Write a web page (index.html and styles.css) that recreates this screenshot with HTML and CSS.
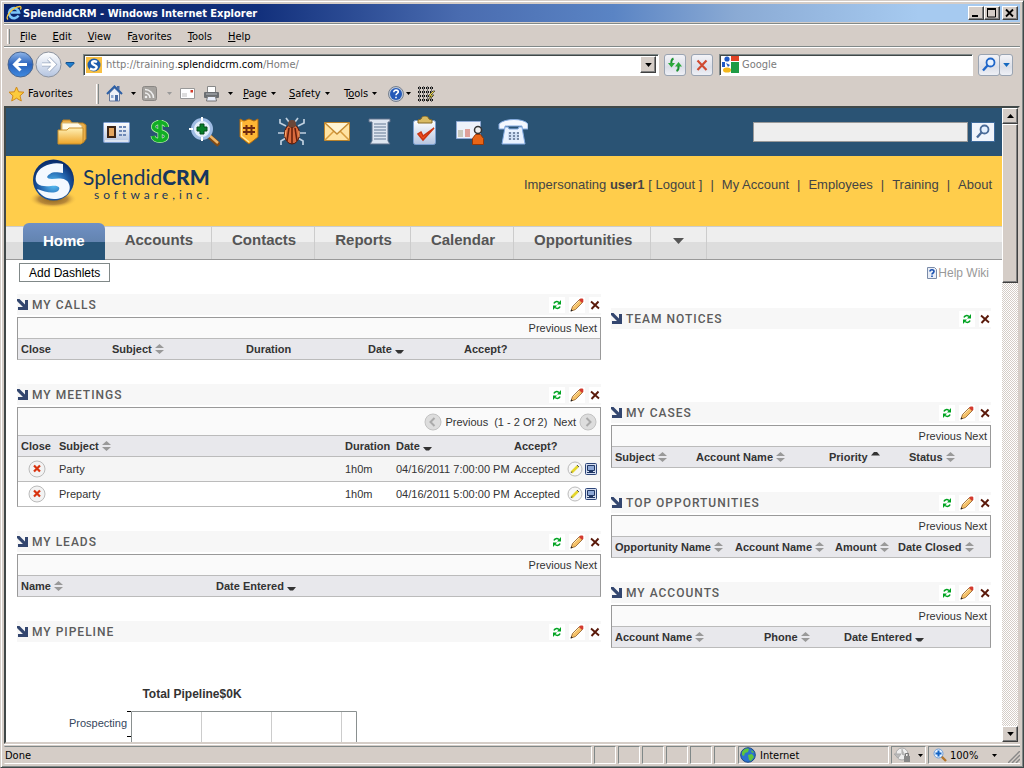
FILE: index.html
```html
<!DOCTYPE html>
<html lang="en">
<head>
	<meta charset="utf-8">
	<title>SplendidCRM</title>
	<link rel="stylesheet" href="styles.css">
</head>
<body>
<svg class="defs" aria-hidden="true">
	<defs>
		<linearGradient id="gBlue" x1="0" y1="0" x2="0" y2="1"><stop offset="0" stop-color="#8fb6ea"/><stop offset=".5" stop-color="#2a62bb"/><stop offset="1" stop-color="#3f8ae0"/></linearGradient>
		<linearGradient id="gPale" x1="0" y1="0" x2="0" y2="1"><stop offset="0" stop-color="#fff"/><stop offset="1" stop-color="#b4c4e0"/></linearGradient>
		<linearGradient id="gGold" x1="0" y1="0" x2="0" y2="1"><stop offset="0" stop-color="#fff0b4"/><stop offset="1" stop-color="#eda52a"/></linearGradient>
		<radialGradient id="gLogo" cx=".5" cy=".6" r=".55"><stop offset="0" stop-color="#5bc4f8"/><stop offset=".6" stop-color="#2263ad"/><stop offset="1" stop-color="#0a2e6e"/></radialGradient>
		<radialGradient id="gShadow"><stop offset="0" stop-color="#8d641d"/><stop offset=".6" stop-color="#b8893a"/><stop offset="1" stop-color="#ffcd4b" stop-opacity="0"/></radialGradient>
	</defs>
	<symbol id="caret" viewBox="0 0 5 3"><path d="M0 0h5L2.500 3z"/></symbol>
	<symbol id="sort" viewBox="0 0 9 10"><path d="M4.500 0L9 4H0zM0 6h9L4.500 10z" fill="#999"/></symbol>
	<symbol id="desc" viewBox="0 0 9 10"><path d="M0 6h9L6 9.500H3z" fill="#333"/></symbol>
	<symbol id="asc" viewBox="0 0 9 10"><path d="M3 0h3l3 3.500H0z" fill="#333"/></symbol>
	<symbol id="arrow" viewBox="0 0 11 11"><path d="M0 0h2.500L8 5.500V1h3v10H1V8h5L0 2z" fill="#33466f"/></symbol>
	<symbol id="refresh" viewBox="0 0 16 16"><path fill="#fff" d="M0 0h16v16H0z"/><path d="M5 6.500c.5-2 3-2.500 5-1M11 9.500c-.5 2-3 2.500-5 1" fill="none" stroke="#00a321" stroke-width="1.500"/><path d="M12 3v4.500H8zM4 13V8.500h4z" fill="#00a321"/></symbol>
	<symbol id="pencil" viewBox="0 0 16 16"><path fill="#fff" d="M0 0h16v16H0z"/><path d="M2 14l1.500-4.500 7-7 3 3-7 7z" fill="#f5c168" stroke="#8e5a26" stroke-width=".8"/><path d="M4.500 9.500l6-6" stroke="#ffe9b4"/><path d="M10 3l1.500-1.500h2l.8.8v2L13 6z" fill="#d33a2e"/><path d="M1.500 14.500l.8-2.300 1.500 1.500z" fill="#222"/></symbol>
	<symbol id="cross" viewBox="0 0 12 16"><path fill="#fff" d="M0 0h12v16H0z"/><path d="M2 4.500l8 7M9.500 4.500l-7 7.500" stroke="#5a1a0b" stroke-width="1.900" fill="none"/></symbol>
	<symbol id="closeRow" viewBox="0 0 18 18"><circle cx="9" cy="9" r="8" fill="#f3f3f3" stroke="#bbb"/><path d="M6 5.500l6 6M12 5.500l-6 6" stroke="#d8330f" stroke-width="2.200"/></symbol>
	<symbol id="editRow" viewBox="0 0 16 16"><circle cx="8" cy="8" r="7" fill="#f7f7f7" stroke="#bbb"/><path d="M4.500 11.500L11 5" stroke="#e5d62c" stroke-width="2.600"/><path d="M4 12l1-1.500M10 4l2 2" stroke="#555"/></symbol>
	<symbol id="viewRow" viewBox="0 0 12 12"><rect x=".5" y=".5" width="11" height="11" rx="1" fill="#d5def0" stroke="#2c4478"/><path d="M2.500 2.500h7v5h-7z" fill="#8ea8d6" stroke="#203765"/><path d="M2 9.500h8M4 8.500h4" stroke="#203765"/></symbol>
	<symbol id="lens" viewBox="0 0 16 16"><circle cx="9.500" cy="5.500" r="4" fill="#e6f1ff" stroke="currentColor" stroke-width="1.800"/><path d="M6.500 8.500L2 13.500" stroke="currentColor" stroke-width="2.400"/></symbol>
	<symbol id="prev" viewBox="0 0 18 18"><circle cx="9" cy="9" r="8" fill="#ddd" stroke="#c3c3c3"/><path d="M10.500 5L6.500 9l4 4" fill="none" stroke="#aaa" stroke-width="2"/></symbol>
	<symbol id="next" viewBox="0 0 18 18"><circle cx="9" cy="9" r="8" fill="#ddd" stroke="#c3c3c3"/><path d="M7.500 5l4 4-4 4" fill="none" stroke="#aaa" stroke-width="2"/></symbol>
	<symbol id="scrollUp" viewBox="0 0 7 4"><path d="M3.500 0L7 4H0z"/></symbol>
</svg>
<div class="window">
	<header class="titlebar">
		<svg width="16" height="16" viewBox="0 0 16 16"><path d="M12.500 10.500a5 5 0 1 1 .5-3H5" fill="none" stroke="#7cc6f7" stroke-width="2.600"/><path d="M2 14.500C-1 12 6 2 14 1.500c1.500 0 1 2 .3 3" fill="none" stroke="#f5c53a" stroke-width="1.300"/></svg>
		<h1>SplendidCRM - Windows Internet Explorer</h1>
		<div class="window-buttons">
			<button aria-label="Minimize"><svg width="12" height="10"><path d="M2 7h6v2H2z"/></svg></button>
			<button aria-label="Maximize"><svg width="12" height="10"><path d="M1.500 1h8v8h-8z" fill="none" stroke="#000"/><path d="M1 0h9v2H1z"/></svg></button>
			<button aria-label="Close"><svg width="12" height="10"><path d="M2 1.500l7 7M9 1.500l-7 7" stroke="#000" stroke-width="1.800"/></svg></button>
		</div>
	</header>
	<nav class="menubar">
		<span class="grip"></span>
		<button><u>F</u>ile</button>
		<button><u>E</u>dit</button>
		<button><u>V</u>iew</button>
		<button>F<u>a</u>vorites</button>
		<button><u>T</u>ools</button>
		<button><u>H</u>elp</button>
	</nav>
	<div class="address-bar">
		<div class="history">
			<button aria-label="Back"><svg width="27" height="27" viewBox="0 0 27 27"><circle cx="13.500" cy="13.500" r="12.500" fill="url(#gBlue)" stroke="#47648f"/><path d="M20 13.500H8M13.500 7.500l-6 6 6 6" fill="none" stroke="#fff" stroke-width="3"/></svg></button>
			<button aria-label="Forward"><svg width="27" height="27" viewBox="0 0 27 27"><circle cx="13.500" cy="13.500" r="12.500" fill="url(#gPale)" stroke="#8c939f"/><path d="M7 13.500h12M13.500 7.500l6 6-6 6" fill="none" stroke="#9ba9c0" stroke-width="4"/><path d="M7 13.500h12M13.500 7.500l6 6-6 6" fill="none" stroke="#fff" stroke-width="2.600"/></svg></button>
			<button aria-label="Recent pages"><svg width="10" height="6" viewBox="0 0 10 6"><path d="M1 .5h8v1L5 5.500 1 1.500z" fill="#1f7fd0" stroke="#12508f"/></svg></button>
		</div>
		<div class="address field">
			<svg width="16" height="16" viewBox="0 0 16 16"><path fill="#f8c043" d="M0 0h16v16H0z"/><circle cx="8" cy="8" r="6.500" fill="#1e5cab"/><path d="M11 5C7 3 4.500 5.500 7 7.200s5 2 3 4.300-5 .5-6 0" fill="none" stroke="#fff" stroke-width="2.400"/></svg>
			<a href="#">http://training.<b>splendidcrm.com</b>/Home/</a>
			<button class="drop" aria-label="Show addresses"><svg width="7" height="4"><use href="#caret"/></svg></button>
		</div>
		<button class="tool" aria-label="Refresh"><svg width="16" height="16" viewBox="0 0 16 16"><path d="M6.500 1.500C4 2.500 4 5 4.500 8" fill="none" stroke="#1c9130" stroke-width="2"/><path d="M1 6h7l-3.500 4.500zM8 9.500h7L11.500 5z" fill="#2ca93b"/><path d="M11.500 9c.3 2.500 0 4-2 5" fill="none" stroke="#1c9130" stroke-width="2"/></svg></button>
		<button class="tool" aria-label="Stop"><svg width="16" height="16" viewBox="0 0 16 16"><path d="M3.500 3.500l9 9.500M12.500 3.500l-9 9.500" stroke="#d04a31" stroke-width="2.200"/></svg></button>
		<div class="web-search field">
			<svg width="17" height="17" viewBox="0 0 17 17"><path fill="#1f9b45" d="M9 6h8v11H9z"/><path fill="#e24325" d="M9 0h8v5H9z"/><path fill="#fff" d="M0 0h8v17H0z"/><circle cx="5" cy="3" r="2.600" fill="#2059c4"/><path fill="#2059c4" d="M0 6h3v5H0zM4 7l4 2-2 2z"/><ellipse cx="5" cy="14" rx="4" ry="2.600" fill="#f5b81b"/></svg>
			<input type="text" placeholder="Google" aria-label="Search Google">
		</div>
		<div class="go">
			<button class="tool blue" aria-label="Search"><svg width="16" height="16"><use href="#lens"/></svg></button>
			<button class="tool narrow" aria-label="Search options"><svg width="7" height="4" fill="#1468c0"><use href="#caret"/></svg></button>
		</div>
	</div>
	<div class="command-bar">
		<button class="favorites"><svg width="17" height="16" viewBox="0 0 17 16"><path d="M8.500 1l2.100 4.800 5.400.4-4 3.600 1.300 5.200-4.800-2.800L3.700 15 5 9.800 1 6.200l5.400-.4z" fill="#fccb3c" stroke="#d18a1a"/></svg>Favorites</button>
		<span class="grip"></span>
		<button class="cmd home"><svg width="17" height="17" viewBox="0 0 17 17"><path d="M3.500 8v8h10V8l-5-5z" fill="#eef1f8" stroke="#66799c"/><path d="M1 9l7.500-7.500L16 9" fill="none" stroke="#2c5fa5" stroke-width="2"/><path d="M11 1h2.500v4L11 3zM9 10h3v6H9z" fill="#496ba3"/><path d="M5 10h2.500v3H5z" fill="#8ea8cf"/></svg><svg class="car"><use href="#caret"/></svg></button>
		<button class="cmd feed"><svg width="15" height="15" viewBox="0 0 15 15"><rect x=".5" y=".5" width="14" height="14" rx="2" fill="#a6a39f" stroke="#8a8784"/><path d="M3 7a5 5 0 0 1 5 5M3 3.500A8.500 8.500 0 0 1 11.500 12" stroke="#eee" stroke-width="1.600" fill="none"/><circle cx="4" cy="11" r="1.300" fill="#eee"/></svg><svg class="car dim"><use href="#caret"/></svg></button>
		<button class="cmd mail" aria-label="Read mail"><svg width="15" height="11" viewBox="0 0 15 11"><path d="M.5.5h14v10H.5z" fill="#fff" stroke="#999"/><path d="M10.500 2h2.500v2.500h-2.500z" fill="#d43a29"/><path d="M2 6h5M2 8h5" stroke="#bbb"/></svg></button>
		<button class="cmd print"><svg width="17" height="16" viewBox="0 0 17 16"><path d="M4.500.5h8v6h-8z" fill="#fff" stroke="#888"/><rect x="1" y="6" width="15" height="6" rx="1" fill="#6b6e72"/><path d="M3 8h11" stroke="#b8bbc0"/><path d="M4.500 10.500h8l1 4.500h-10z" fill="#e8eefb" stroke="#777"/></svg><svg class="car"><use href="#caret"/></svg></button>
		<button class="cmd page"><span><u>P</u>age</span><svg class="car"><use href="#caret"/></svg></button>
		<button class="cmd safety"><span><u>S</u>afety</span><svg class="car"><use href="#caret"/></svg></button>
		<button class="cmd tools"><span>T<u>o</u>ols</span><svg class="car"><use href="#caret"/></svg></button>
		<button class="cmd help"><svg width="16" height="16" viewBox="0 0 16 16"><circle cx="8" cy="8" r="7.500" fill="#bcc8da" stroke="#77808d"/><circle cx="8" cy="8" r="6" fill="#2459b8"/><path d="M5.800 6.200c0-3 4.500-2.500 4.500-.2C10.300 7.500 8 7.400 8 9.200M8 10.700v1.500" fill="none" stroke="#fff" stroke-width="1.600"/></svg><svg class="car"><use href="#caret"/></svg></button>
		<button class="cmd" aria-label="Bits"><svg width="17" height="16" viewBox="0 0 17 16"><path d="M0 2h16M0 6h16M0 10h16M0 14h16" stroke="#111" stroke-width="3" stroke-dasharray="3 1"/><path d="M1 2h15M1 6h15M1 10h15M1 14h15" stroke="#fff" stroke-width="1" stroke-dasharray="1 3"/><path d="M0 .5h16M0 4.500h16M0 8.500h16M0 12.500h16M0 3.500h16M0 7.500h16M0 11.500h16M0 15.500h16" stroke="#d5cdc7" stroke-dasharray="1 1"/><path d="M15 5l-5 5h3l-4 5 7-6h-3l4-4z" fill="#fbe54a" stroke="#222" stroke-width=".6"/></svg></button>
	</div>

	<div class="viewport">
		<main class="page">
			<div class="shortcuts">
				<a href="#" title="Documents"><svg viewBox="0 0 32 32"><path d="M5 8l2-4h7l2 3h11l3 2v14l-3 4H5z" fill="#e9ad48" stroke="#b57e24"/><path d="M6 7h16l4 3v9H6z" fill="#fffbe8" stroke="#d8ba77"/><path d="M2 14h9l2-2h14v14l-2 2H2z" fill="url(#gGold)" stroke="#c98f2a"/></svg></a>
				<a href="#" title="Contacts"><svg viewBox="0 0 32 32"><rect x="3.500" y="6.500" width="26" height="20" rx="1" fill="url(#gPale)" stroke="#7f9fd2"/><path d="M7 10h9v12H7z" fill="#3b2416"/><path d="M9 12h5v8H9z" fill="#e3a55f"/><path d="M19 11h8M19 15h8M19 19h8" stroke="#6d87b5" stroke-width="2" stroke-dasharray="3 1"/><path d="M5 25h23" stroke="#fff"/></svg></a>
				<a href="#" title="Opportunities"><svg viewBox="0 0 32 32"><path d="M22.500 11c0-6-13-6-13 0 0 5 13 4 13 9 0 6-13 6-13.500 0M16 4v22" fill="none" stroke="#b9f2a5" stroke-width="5"/><path d="M22.500 11c0-6-13-6-13 0 0 5 13 4 13 9 0 6-13 6-13.500 0M16 4v22" fill="none" stroke="#11ad26" stroke-width="3.600"/></svg></a>
				<a href="#" title="Leads"><svg viewBox="0 0 32 32"><path d="M21 20l10 9" stroke="#7f4a16" stroke-width="5"/><path d="M21 19l9 8" stroke="#efb568" stroke-width="2.400"/><circle cx="14" cy="13" r="9.500" fill="#e4effb" stroke="#9fbce4" stroke-width="3"/><path d="M14 1v4M1 13h4M14 21v4" stroke="#fff" stroke-width="2"/><path d="M12 8h4v3h3v4h-3v3h-4v-3H9v-4h3z" fill="#087f2a" stroke="#054d1a"/></svg></a>
				<a href="#" title="Cases"><svg viewBox="0 0 32 32"><path d="M8 3l4 2 5-2 5 2 4-2v18l-9 7-9-7z" fill="#ffb634" stroke="#b06b11"/><path d="M9.500 6v14l7.500 6" fill="none" stroke="#ffeaa3" stroke-width="1.500"/><path d="M11 12h12M11 16h12M14.500 9v10M19.500 9v10" stroke="#702b10" stroke-width="2"/></svg></a>
				<a href="#" title="Bugs"><svg viewBox="0 0 32 32"><path d="M10 10L4 7V3M22 10l6-3V3M9 17H2M23 17h7M10 22l-5 3v4M22 22l5 3v4M13 6l-3-4M19 6l3-4" fill="none" stroke="#c0d0df" stroke-width="1.700"/><ellipse cx="16" cy="18" rx="7.500" ry="10" fill="#d96a3d" stroke="#571a08"/><circle cx="16" cy="8" r="4" fill="#6c4738"/><path d="M16 11v17M13 12l-2 13M19 12l2 13" stroke="#67210c" stroke-width="1.600"/><path d="M10 14l-1 7M23 15v6" stroke="#ffaf70"/></svg></a>
				<a href="#" title="Emails"><svg viewBox="0 0 32 32"><path d="M4.500 6.500h25v18h-25z" fill="#ffe3a2" stroke="#b9822b"/><path d="M5 24l9-9M29 24l-9-9" stroke="#d89d3e" stroke-width="1.500"/><path d="M5 7l12 11L29 7" fill="#fff4d2" stroke="#c58b33" stroke-width="1.500"/></svg></a>
				<a href="#" title="Documents list"><svg viewBox="0 0 32 32"><path d="M5 3h21v3h-2v19l2 3H6l2-3V6H5z" fill="#dfe6f1" stroke="#5e708a"/><path d="M10 8h12M10 11h12M10 14h12M10 17h12M10 20h12M10 23h12" stroke="#8d9db2" stroke-width="1.500"/></svg></a>
				<a href="#" title="Tasks"><svg viewBox="0 0 32 32"><rect x="5.500" y="4.500" width="22" height="24" rx="2" fill="url(#gPale)" stroke="#7b9fd0"/><path d="M10 7V4l3-1c1-4 7-4 8 0l3 1v3z" fill="#d9bb64" stroke="#826724"/><path d="M10 18l5 6 11-12-11 8-2-4z" fill="#f05020" stroke="#c93514" stroke-width="1.500"/></svg></a>
				<a href="#" title="Meetings"><svg viewBox="0 0 32 32"><path d="M4.500 5.500h24v17h-24z" fill="#eef2fa" stroke="#91abd6"/><path d="M6 14h5v7H6z" fill="#c9c8bc"/><path d="M13 13h5v8h-5z" fill="#dfa09a"/><circle cx="26" cy="14" r="3.500" fill="#eee" stroke="#333" stroke-width="1.500"/><path d="M20.500 28.500v-6l3-4h5l3 4v6z" fill="#e86517" stroke="#963607"/></svg></a>
				<a href="#" title="Calls"><svg viewBox="0 0 32 32"><path d="M3 8c5-6 25-6 29 0v5h-6v-3H9v3H3z" fill="#f4f8ff" stroke="#83aae0"/><path d="M9 11h3l1 2h9l1-2h3l1 6 2 11H6l2-11z" fill="#e9f2ff" stroke="#83aae0"/><path d="M12 16h11v8H12z" fill="#cfdef3"/><path d="M13 17h10M13 20h10M13 23h10" stroke="#5b6e8c" stroke-width="1.500" stroke-dasharray="2 2"/></svg></a>
				<form class="site-search">
					<input type="text" aria-label="Search">
					<button type="button" aria-label="Search"><svg width="16" height="16"><use href="#lens"/></svg></button>
				</form>
			</div>
			<div class="banner">
				<a href="#" class="logo">
					<svg width="48" height="54" viewBox="0 0 48 54"><ellipse cx="24" cy="43" rx="24" ry="9" fill="url(#gShadow)"/><circle cx="24.500" cy="24" r="20.500" fill="url(#gLogo)"/><path d="M34 8C24 5 9 10 7 20c-2 9 5 11 15 10 8-1 10 2 7 5-5 3-13 1-21-2 3 6 9 10 17 10 12 0 18-8 15-15-2-6-9-6-17-5-6 0-6-3-2-5 4-3 9-1 13-1z" fill="#f4f9ff"/></svg>
					<span class="wordmark"><span>Splendid<b>CRM</b></span><small>software,inc.</small></span>
				</a>
				<div class="account">
					<span>Impersonating <b>user1</b> [ <a href="#">Logout</a> ]</span><i>|</i><a href="#">My Account</a><i>|</i><a href="#">Employees</a><i>|</i><a href="#">Training</a><i>|</i><a href="#">About</a>
				</div>
			</div>
			<nav class="tabs">
				<a href="#" class="active">Home</a>
				<a href="#">Accounts</a>
				<a href="#">Contacts</a>
				<a href="#">Reports</a>
				<a href="#">Calendar</a>
				<a href="#">Opportunities</a>
				<a href="#" class="more" aria-label="More"><svg width="11" height="6" viewBox="0 0 11 6"><path d="M0 0h11L5.500 6z" fill="#555"/></svg></a>
			</nav>
			<div class="actions">
				<button>Add Dashlets</button>
				<a href="#"><svg width="12" height="12" viewBox="0 0 12 12"><path d="M1.500.5h7l2 2v9h-9z" fill="#e9eef7" stroke="#7a8ba8"/><path d="M4 4.500c0-2.500 4-2 4 0C8 6 6 6 6 7.500M6 8.500v1.500" fill="none" stroke="#174fb0" stroke-width="1.600"/></svg>Help Wiki</a>
			</div>
			<div class="dashlets">
				<div class="column">
					<section>
						<h2><svg class="arr"><use href="#arrow"/></svg>MY CALLS<span><svg><use href="#refresh"/></svg><svg><use href="#pencil"/></svg><svg class="x"><use href="#cross"/></svg></span></h2>
						<div class="list">
							<div class="pager"><button>Previous</button> <button>Next</button></div>
							<table class="calls">
								<tr><th>Close</th><th>Subject <svg><use href="#sort"/></svg></th><th>Duration</th><th>Date <svg><use href="#desc"/></svg></th><th>Accept?</th></tr>
							</table>
						</div>
					</section>
					<section>
						<h2><svg class="arr"><use href="#arrow"/></svg>MY MEETINGS<span><svg><use href="#refresh"/></svg><svg><use href="#pencil"/></svg><svg class="x"><use href="#cross"/></svg></span></h2>
						<div class="list">
							<div class="pager full"><button><svg><use href="#prev"/></svg>Previous</button><span>(1 - 2 Of 2)</span><button>Next<svg><use href="#next"/></svg></button></div>
							<table class="meetings">
								<tr><th>Close</th><th>Subject <svg><use href="#sort"/></svg></th><th>Duration</th><th>Date <svg><use href="#desc"/></svg></th><th>Accept?</th><th></th></tr>
								<tr class="odd"><td><svg class="close"><use href="#closeRow"/></svg></td><td><a href="#">Party</a></td><td>1h0m</td><td>04/16/2011 7:00:00 PM</td><td>Accepted</td><td><svg class="edit"><use href="#editRow"/></svg><svg class="view"><use href="#viewRow"/></svg></td></tr>
								<tr><td><svg class="close"><use href="#closeRow"/></svg></td><td><a href="#">Preparty</a></td><td>1h0m</td><td>04/16/2011 5:00:00 PM</td><td>Accepted</td><td><svg class="edit"><use href="#editRow"/></svg><svg class="view"><use href="#viewRow"/></svg></td></tr>
							</table>
						</div>
					</section>
					<section>
						<h2><svg class="arr"><use href="#arrow"/></svg>MY LEADS<span><svg><use href="#refresh"/></svg><svg><use href="#pencil"/></svg><svg class="x"><use href="#cross"/></svg></span></h2>
						<div class="list">
							<div class="pager"><button>Previous</button> <button>Next</button></div>
							<table class="leads">
								<tr><th>Name <svg><use href="#sort"/></svg></th><th>Date Entered <svg><use href="#desc"/></svg></th></tr>
							</table>
						</div>
					</section>
					<section>
						<h2><svg class="arr"><use href="#arrow"/></svg>MY PIPELINE<span><svg><use href="#refresh"/></svg><svg><use href="#pencil"/></svg><svg class="x"><use href="#cross"/></svg></span></h2>
						<svg class="chart" width="350" height="260" viewBox="0 0 350 260">
							<text class="chart-title" x="175" y="56">Total Pipeline$0K</text>
							<path d="M184.500 70v180M254.500 70v180M324.500 70v180" stroke="#ccc"/>
							<path d="M114.500 69.500h225v180h-225z" fill="none" stroke="#8a9090"/>
							<path d="M110 69.500h4M110 94.500h4" stroke="#000"/>
							<text class="chart-label" x="110" y="85">Prospecting</text>
						</svg>
					</section>
				</div>
				<div class="column side">
					<section class="notices">
						<h2><svg class="arr"><use href="#arrow"/></svg>TEAM NOTICES<span><svg><use href="#refresh"/></svg><svg class="x"><use href="#cross"/></svg></span></h2>
					</section>
					<section>
						<h2><svg class="arr"><use href="#arrow"/></svg>MY CASES<span><svg><use href="#refresh"/></svg><svg><use href="#pencil"/></svg><svg class="x"><use href="#cross"/></svg></span></h2>
						<div class="list">
							<div class="pager"><button>Previous</button> <button>Next</button></div>
							<table class="cases">
								<tr><th>Subject <svg><use href="#sort"/></svg></th><th>Account Name <svg><use href="#sort"/></svg></th><th>Priority <svg><use href="#asc"/></svg></th><th>Status <svg><use href="#sort"/></svg></th></tr>
							</table>
						</div>
					</section>
					<section>
						<h2><svg class="arr"><use href="#arrow"/></svg>TOP OPPORTUNITIES<span><svg><use href="#refresh"/></svg><svg><use href="#pencil"/></svg><svg class="x"><use href="#cross"/></svg></span></h2>
						<div class="list">
							<div class="pager"><button>Previous</button> <button>Next</button></div>
							<table class="opportunities">
								<tr><th>Opportunity Name <svg><use href="#sort"/></svg></th><th>Account Name <svg><use href="#sort"/></svg></th><th>Amount <svg><use href="#sort"/></svg></th><th>Date Closed <svg><use href="#sort"/></svg></th></tr>
							</table>
						</div>
					</section>
					<section>
						<h2><svg class="arr"><use href="#arrow"/></svg>MY ACCOUNTS<span><svg><use href="#refresh"/></svg><svg><use href="#pencil"/></svg><svg class="x"><use href="#cross"/></svg></span></h2>
						<div class="list">
							<div class="pager"><button>Previous</button> <button>Next</button></div>
							<table class="accounts">
								<tr><th>Account Name <svg><use href="#sort"/></svg></th><th>Phone <svg><use href="#sort"/></svg></th><th>Date Entered <svg><use href="#desc"/></svg></th></tr>
							</table>
						</div>
					</section>
				</div>
			</div>
		</main>
		<div class="scrollbar">
			<button aria-label="Scroll up"><svg width="7" height="4"><use href="#scrollUp"/></svg></button>
			<div class="thumb"></div>
			<button class="down" aria-label="Scroll down"><svg width="7" height="4"><use href="#caret"/></svg></button>
		</div>
	</div>

	<footer class="statusbar">
		<span class="done">Done</span>
		<span class="pane"></span>
		<span class="pane"></span>
		<span class="pane"></span>
		<span class="pane"></span>
		<span class="pane"></span>
		<span class="pane"></span>
		<span class="zone"><svg width="16" height="16" viewBox="0 0 16 16"><circle cx="8" cy="8" r="7.300" fill="#2a72cf" stroke="#1c4786"/><path d="M2 5c2-4 6-4 7-3L8 5 5 6l-1 3-2-1zM8 8l4-1 2 3-3 4-2-1zM11 3l3 2-2 1z" fill="#5fc63c"/></svg>Internet</span>
		<span class="protected"><svg width="17" height="16" viewBox="0 0 17 16"><circle cx="8" cy="7" r="6" fill="#eee" stroke="#aaa"/><path d="M0 7h7l-3 4zM8 2v5l4 2" fill="#bbb" stroke="#aaa"/><path d="M10 9h6v6h-6z" fill="#888"/><path d="M11.500 9V6.500h3V9" fill="none" stroke="#777"/></svg><svg class="car"><use href="#caret"/></svg></span>
		<span class="zoom"><svg width="14" height="14" viewBox="0 0 14 14"><path d="M8 8l5 5" stroke="#b5762c" stroke-width="2.400"/><circle cx="5.500" cy="5.500" r="4.500" fill="#e3f0ff" stroke="#6f9fd8"/><path d="M5.500 2.500v6M2.500 5.500h6" stroke="#1464c4" stroke-width="2"/></svg>100%<svg class="car"><use href="#caret"/></svg><svg class="resize" width="12" height="12"><path d="M0 12L12 0M4 12l8-8M8 12l4-4" stroke="#888" stroke-width="1.500"/></svg></span>
	</footer>
</div>
</body>
</html>
```
FILE: styles.css
```css
* {
	box-sizing: border-box;
}
html, body {
	height: 100%;
}
body {
	font-family: "Liberation Sans", Arial, sans-serif;
	font-size: 11px;
	margin: 0;
	overflow: hidden;
}
button, input {
	background: none;
	border: 0;
	color: inherit;
	font: inherit;
	margin: 0;
	padding: 0;
}
a {
	color: inherit;
	text-decoration: none;
}
svg {
	flex: none;
}
.defs {
	height: 0;
	position: absolute;
	width: 0;
}

/* browser window */
.window {
	background: #d5cdc7;
	border: 1px solid #d5cdc7;
	border-bottom-color: #404848;
	border-right-color: #404848;
	box-shadow: inset 1px 1px #fff, inset -1px -1px #808888;
	display: flex;
	flex-direction: column;
	font-family: "DejaVu Sans Condensed", "DejaVu Sans", Tahoma, sans-serif;
	height: 100vh;
	padding: 3px;
}
.titlebar {
	align-items: center;
	background: linear-gradient(90deg, #0a246a, #12307c 25%, #4a6cb0 45%, #5a84c4 60%, #8aaad4 72%, #a6caf0 90%);
	color: #fff;
	display: flex;
	flex: none;
	height: 18px;
	padding: 0 2px;
}
.titlebar h1 {
	flex: 1;
	font-size: 11px;
	margin: 0 0 0 1px;
}
.window-buttons {
	display: flex;
}
.window-buttons button, .scrollbar button, .thumb, .drop {
	align-items: center;
	background: #d5cdc7;
	border: 1px solid #fff;
	border-bottom-color: #404040;
	border-right-color: #404040;
	box-shadow: inset -1px -1px #808080;
	color: #000;
	display: flex;
	justify-content: center;
}
.window-buttons button {
	height: 14px;
	width: 16px;
}
.window-buttons button:last-child {
	margin-left: 2px;
}
.menubar {
	align-items: center;
	border-bottom: 1px solid #fff;
	border-top: 1px solid #808888;
	box-shadow: inset 0 1px #fff, inset 0 -1px #808888;
	display: flex;
	flex: none;
	gap: 16px;
	height: 25px;
	margin-top: 1px;
	padding: 2px 0 0 3px;
}
.menubar .grip {
	margin-right: -6px;
}
.grip {
	border-left: 1px solid #fff;
	border-right: 1px solid #808888;
	height: 15px;
	width: 3px;
}
.address-bar {
	align-items: center;
	display: flex;
	flex: none;
	gap: 5px;
	height: 33px;
	padding: 0 7px 0 3px;
}
.history {
	align-items: center;
	display: flex;
	margin-right: 3px;
}
.history button {
	display: flex;
}
.history button + button {
	margin-left: 1px;
}
.history button:last-child {
	margin-left: 3px;
}
.field {
	align-items: center;
	background: #fff;
	border: 1px solid #fff;
	border-left-color: #808888;
	border-top-color: #808888;
	box-shadow: inset 1px 1px #404848;
	color: #7a7a7a;
	display: flex;
	height: 22px;
	padding: 2px;
}
.address {
	flex: 1;
}
.address a {
	flex: 1;
	margin-left: 4px;
}
.address b {
	color: #000;
	font-weight: normal;
}
.drop {
	height: 17px;
	width: 16px;
}
.web-search {
	margin-left: 1px;
	width: 254px;
}
.web-search input {
	flex: 1;
	margin-left: 3px;
	min-width: 0;
}
.web-search input::placeholder {
	color: #7a7a7a;
}
.tool {
	align-items: center;
	background: linear-gradient(#f3f3f7, #dcdfe8 60%, #eef0f6);
	border: 1px solid #9aa4b2;
	border-radius: 3px;
	display: flex;
	height: 22px;
	justify-content: center;
	width: 22px;
}
.tool.blue {
	color: #1f66c9;
}
.go {
	display: flex;
}
.tool.narrow {
	margin-left: -1px;
	width: 14px;
}
.command-bar {
	align-items: center;
	display: flex;
	flex: none;
	height: 25px;
	padding-left: 4px;
}
.favorites {
	align-items: center;
	display: flex;
	gap: 3px;
	text-align: left;
	width: 88px;
}
.command-bar .grip {
	height: 20px;
	margin-right: 7px;
}
.cmd {
	align-items: center;
	display: flex;
	gap: 4px;
}
.car {
	height: 3px;
	width: 5px;
}
.dim {
	fill: #999;
}
.home, .feed, .mail, .print {
	gap: 8px;
}
.home {
	width: 36px;
}
.feed {
	gap: 10px;
	width: 38px;
}
.mail {
	width: 23px;
}
.print {
	width: 40px;
}
.help {
	gap: 2px;
	width: 30px;
}
.page {
	flex: 1;
}
.cmd.page {
	flex: none;
	width: 46px;
}
.safety {
	width: 55px;
}
.tools {
	width: 44px;
}

/* viewport with scrollbar */
.viewport {
	border: 2px solid;
	border-color: #404848 #d5cdc7 #d5cdc7 #404848;
	box-shadow: 0 1px #fff;
	display: flex;
	flex: 1;
	margin-bottom: 2px;
	min-height: 0;
}
main.page {
	background: #fff;
	color: #333;
	font-family: "Liberation Sans", Arial, sans-serif;
	min-width: 0;
	overflow: hidden;
}
.scrollbar {
	background: repeating-conic-gradient(#fff 0 25%, #d5cdc7 0 50%) 0 0 / 2px 2px;
	display: flex;
	flex-direction: column;
	width: 16px;
}
.scrollbar button {
	height: 16px;
}
.thumb {
	height: 159px;
}
.scrollbar .down {
	margin-top: auto;
}

/* page header */
.shortcuts {
	align-items: center;
	background: #2a5374;
	display: flex;
	gap: 12px;
	height: 48px;
	padding: 0 7px 0 50px;
}
.shortcuts > a, .shortcuts > a svg {
	display: block;
	height: 32px;
	width: 32px;
}
.site-search {
	align-items: center;
	display: flex;
	gap: 3px;
	margin-left: auto;
}
.site-search input {
	background: #eee;
	border: 1px solid #999;
	height: 20px;
	padding: 0 3px;
	width: 215px;
}
.site-search button {
	align-items: center;
	background: #f0f4fb;
	border: 1px solid #3f6b9c;
	color: #4a6b98;
	display: flex;
	height: 20px;
	justify-content: center;
	width: 24px;
}
.banner {
	background: #ffcd4b;
	display: flex;
	height: 70px;
	justify-content: space-between;
	padding: 0 10px 0 23px;
}
.logo {
	color: #16375f;
	display: flex;
	font-family: Lato, sans-serif;
	gap: 6px;
}
.wordmark {
	display: flex;
	flex-direction: column;
	font-size: 21px;
	line-height: 22px;
	padding-top: 10px;
}
.wordmark b {
	font-weight: 900;
}
.wordmark small {
	font-size: 12px;
	letter-spacing: 4px;
	line-height: 14px;
	padding-left: 11px;
}
.account {
	color: #444;
	font-size: 13px;
	line-height: 16px;
	padding-top: 21px;
}
.account i {
	font-style: normal;
	padding: 0 8px;
}
.tabs {
	background: linear-gradient(#eee 15px, #ddd 15px);
	border-bottom: 1px solid #999;
	border-top: 1px solid #ccc;
	color: #555;
	display: flex;
	font-size: 15px;
	font-weight: bold;
	height: 34px;
	line-height: 26px;
	padding-left: 17px;
}
.tabs a {
	border-right: 1px solid #ccc;
	padding: 0 18px 0 20px;
}
.tabs .active {
	background: linear-gradient(#7090c4, #6384b0 19px, #285578 19px);
	border: 0;
	border-radius: 6px 6px 0 0;
	color: #fff;
	margin: -4px 0 -1px;
	padding: 5px 20px 0;
}
.tabs .more {
	padding: 0 22px;
}
.tabs .more svg {
	vertical-align: middle;
}
.actions {
	align-items: center;
	display: flex;
	font-size: 12px;
	justify-content: space-between;
	padding: 3px 13px 12px;
}
.actions button {
	border: 1px solid #808888;
	color: #000;
	height: 19px;
	padding: 0 9px;
}
.actions a {
	align-items: center;
	color: #999;
	display: flex;
}

/* dashlets */
.dashlets {
	display: grid;
	gap: 10px;
	grid-template-columns: 584fr 380fr;
	padding: 0 11px;
}
.column {
	display: flex;
	flex-direction: column;
	gap: 24px;
	min-width: 0;
}
.side {
	padding-top: 14px;
}
.notices {
	height: 70px;
}
h2 {
	align-items: center;
	background: #f7f7f7;
	color: #5c5c5c;
	display: flex;
	font-family: Roboto, sans-serif;
	font-size: 12px;
	font-weight: 500;
	height: 21px;
	letter-spacing: 1px;
	margin: 0 0 2px;
}
h2 .arr {
	height: 11px;
	margin-right: 4px;
	width: 11px;
}
h2 span {
	display: flex;
	gap: 4px;
	margin-left: auto;
}
h2 span svg {
	height: 16px;
	width: 16px;
}
h2 span .x {
	width: 12px;
}
.list {
	border: 1px solid #999;
	border-bottom-color: #bbb;
}
.pager {
	align-items: center;
	background: #fafafa;
	display: flex;
	gap: 3px;
	height: 20px;
	justify-content: flex-end;
	padding-right: 3px;
}
.pager.full {
	gap: 6px;
	height: 27px;
}
.pager button {
	align-items: center;
	display: flex;
	gap: 3px;
}
.pager svg {
	height: 18px;
	width: 18px;
}
table {
	border-spacing: 0;
	table-layout: fixed;
	width: 100%;
}
tr {
	background: #fff;
}
tr:first-child {
	background: #e8e8ec;
}
tr.odd {
	background: #f5f5f5;
}
th, td {
	border-top: 1px solid #bbb;
	height: 25px;
	overflow: hidden;
	padding: 0 0 0 3px;
	text-align: left;
	white-space: nowrap;
}
th {
	height: 21px;
}
td svg {
	vertical-align: middle;
}
th svg {
	height: 10px;
	vertical-align: -1px;
	width: 9px;
}
.close {
	height: 18px;
	margin-left: 7px;
	width: 18px;
}
.edit {
	height: 16px;
	width: 16px;
}
.view {
	height: 12px;
	margin-left: 2px;
	width: 12px;
}
.calls th:nth-child(1) { width: 91px; }
.calls th:nth-child(2) { width: 134px; }
.calls th:nth-child(3) { width: 122px; }
.calls th:nth-child(4) { width: 96px; }
.meetings th:nth-child(1) { width: 38px; }
.meetings th:nth-child(3) { width: 51px; }
.meetings th:nth-child(4) { width: 118px; }
.meetings th:nth-child(5) { width: 53px; }
.meetings th:nth-child(6) { width: 36px; }
.leads th:nth-child(1) { width: 195px; }
.cases th:nth-child(1) { width: 81px; }
.cases th:nth-child(2) { width: 133px; }
.cases th:nth-child(3) { width: 80px; }
.opportunities th:nth-child(1) { width: 120px; }
.opportunities th:nth-child(2) { width: 100px; }
.opportunities th:nth-child(3) { width: 63px; }
.accounts th:nth-child(1) { width: 149px; }
.accounts th:nth-child(2) { width: 80px; }
.chart {
	display: block;
	margin-top: -2px;
}
.chart-title {
	fill: #333;
	font-size: 12px;
	font-weight: bold;
	text-anchor: middle;
}
.chart-label {
	fill: #34465c;
	font-size: 11px;
	text-anchor: end;
}

/* status bar */
.statusbar {
	display: flex;
	flex: none;
	gap: 2px;
	height: 18px;
}
.statusbar > span {
	align-items: center;
	border: 1px solid #fff;
	border-left-color: #808888;
	border-top-color: #808888;
	display: flex;
}
.statusbar .done {
	border-left-color: #d5cdc7;
	flex: 1;
}
.statusbar .pane {
	width: 22px;
}
.statusbar .zone {
	gap: 4px;
	padding-left: 1px;
	width: 151px;
}
.statusbar .protected {
	gap: 7px;
	padding-left: 2px;
	width: 35px;
}
.statusbar .zoom {
	border-right: 0;
	gap: 3px;
	padding-left: 4px;
	width: 92px;
}
.zoom .car {
	margin-left: auto;
}
.resize {
	align-self: flex-end;
	margin-left: 8px;
}
```
